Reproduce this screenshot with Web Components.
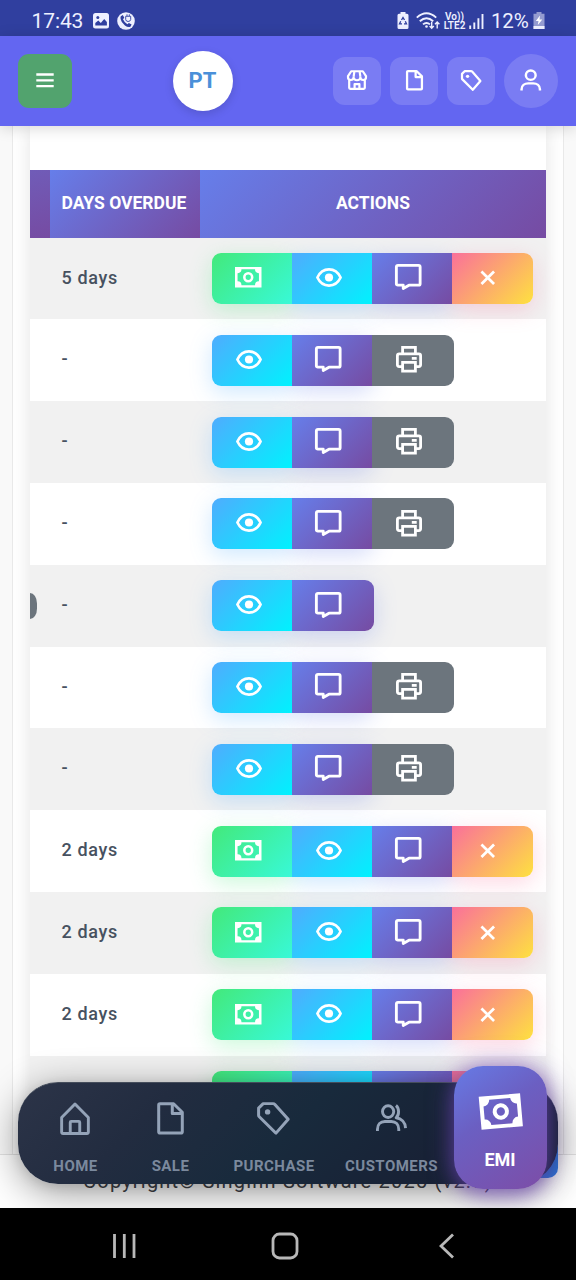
<!DOCTYPE html>
<html lang="en">
<head>
<meta charset="utf-8">
<title>EMI list</title>
<style>
html,body{margin:0;padding:0}
body{width:576px;height:1280px;overflow:hidden;font-family:Roboto,"Liberation Sans",sans-serif;background:#fafafa}
</style>
</head>
<body>
<phone-screen></phone-screen>
<script>
const ICONS = {
  menu:['0 0 20 15','<path d="M1.3 1.5h17.4M1.3 7.4h17.4M1.3 13.2h17.4" stroke-width="2.3"/>'],
  store:['0 0 20 21','<path d="M2.2 9.5v8.8q0 1 1 1h13.6q1 0 1-1V9.5M7.6 19v-4.6h4.8V19M4.2 1.3h11.6L19 6.2v1.2a2.8 2.8 0 0 1-5.6 0 3.4 3.1 0 0 1-6.8 0A2.8 2.8 0 0 1 1 7.4V6.2zM7.4 1.5 6.6 7M12.6 1.5l.8 5.5"/>'],
  file:['0 0 27 33','<path d="M1.7 3q0-1.3 1.3-1.3h13.6l8.7 8.6v19.4q0 1.3-1.3 1.3H3q-1.3 0-1.3-1.3zM15.3 2v9.4h9.8"/>'],
  tag:['0 0 33 34','<path d="M1.6 6.3 6.2 1.7h9.9q1 0 1.8.9L31.2 17.8 19 32.1 2.3 15.2q-.7-.7-.7-1.6z"/><circle cx="10.6" cy="10.2" r="2.7" fill="currentColor" stroke="none"/>'],
  user:['0 0 22 24','<circle cx="11" cy="6.6" r="5"/><path d="M1.6 23v-1.3c0-4 3.2-6.4 6.8-6.4h5.2c3.6 0 6.8 2.4 6.8 6.4V23"/>'],
  users:['0 0 32 28','<circle cx="12.5" cy="7.6" r="5.8"/><path d="M1.5 27v-1.7c0-4.7 3.2-7.8 7.6-7.8h6.8c4.4 0 7.6 3.1 7.6 7.8V27M20.6 1.5c3.5 2.7 3.6 9 .2 12.3 5.5.8 9.4 4.6 9.7 10.4"/>'],
  home:['0 0 31 34','<path d="M1.7 16 15.5 2 29.3 16v15q0 1.4-1.4 1.4H3.1q-1.4 0-1.4-1.4zM10.6 32V21q0-1 1-1h7.8q1 0 1 1v11"/>'],
  money:['0 0 27 21','<path fill="currentColor" stroke="none" fill-rule="evenodd" d="M0 0h27v21H0zM6.6 2.4A3.9 3.9 0 0 1 2.6 6.3v8.4a3.9 3.9 0 0 1 4 3.9h13.8a3.9 3.9 0 0 1 4-3.9V6.3a3.9 3.9 0 0 1-4-3.900z"/><circle cx="13.5" cy="10.5" r="4" stroke-width="2.6"/>'],
  eye:['0 0 26 19','<path d="M1.4 9.5Q5.2 1.4 13 1.4t11.6 8.1q-3.8 8.1-11.6 8.1T1.4 9.5z"/><circle cx="13" cy="9.5" r="4.1" fill="currentColor" stroke="none"/>'],
  chat:['0 0 27 27','<path d="M3 1.4h21q1.6 0 1.6 1.6v17q0 1.6-1.6 1.6H14.2L8.4 25v-3.4H3Q1.4 21.6 1.4 20V3Q1.4 1.4 3 1.4z"/>'],
  print:['0 0 26 27','<path d="M6.6 8V1.4h12.8V8M6.6 21H3.2q-1.8 0-1.8-1.8V9.9Q1.4 8 3.2 8h19.6q1.8 0 1.8 1.9v9.3q0 1.8-1.8 1.8h-3.4M6.6 16.8h12.8v8.8H6.6zM15.8 12.5h4.9" stroke-linejoin="miter"/>'],
  close:['0 0 16 16','<path d="M1.5 1.5l13 13M14.5 1.5l-13 13"/>']
};
const define = (name, html) => customElements.define(name, class extends HTMLElement{
  connectedCallback(){
    if(this.shadowRoot) return;
    this.attachShadow({mode:'open'}).innerHTML = typeof html==='function' ? html(this) : html;
  }
});

define('ui-icon', el => {
  const [vb,body] = ICONS[el.getAttribute('name')];
  return `<style>:host{display:block;flex:none}svg{display:block;overflow:visible}</style>
  <svg style="width:${el.getAttribute('w')}px;height:${el.getAttribute('h')}px" preserveAspectRatio="none" viewBox="${vb}" fill="none" stroke="currentColor" stroke-width="${el.getAttribute('sw')||3}" stroke-linejoin="round" stroke-linecap="butt">${body}</svg>`;
});

define('status-bar', `<style>
:host{display:flex;align-items:center;height:36px;background:#303f9f;color:#eef0ff;padding:6px 31px 0 31.5px;box-sizing:border-box}
svg{display:block;flex:none}.time{font-size:21px;letter-spacing:-.1px;width:61px}.gap{flex:1}
.lte{width:23px;margin:0 3px 0 2px;font-size:10px;line-height:9px;font-weight:600;text-align:center;white-space:nowrap}
.pct{font-size:20.5px;width:38px;margin-left:7px;margin-right:4px;letter-spacing:-.2px}
</style>
<span class="time">17:43</span>
<svg width="16" height="16" viewBox="0 0 16 16"><rect width="16" height="15.4" rx="2.5" fill="#eef0ff"/><path d="M2.3 12.6V10l3-2.4 2.5 2.3 3.4-3.8 2.7 3v3.5z" fill="#303f9f"/><circle cx="4.8" cy="4.4" r="1.5" fill="#303f9f"/></svg>
<svg width="18" height="18" viewBox="0 0 18 18" style="margin-left:8px"><circle cx="9" cy="9" r="8.8" fill="#eef0ff"/><path d="M3.8 4.2 5.8 3l1.5 2.8L6 7.2q1.4 3.4 4.4 5l1.5-1.3 2.7 1.7-1.2 2.2q-2.4 1-5.5-1.3-3.7-3-4.3-6.6Q3.300 5 3.800 4.200z" fill="#303f9f"/><path d="M8.700 4.300h5v3.200q-.3 2-2.600 2-2.100 0-2.400-2zM10 4V2.300M12.300 4V2.300" fill="none" stroke="#303f9f" stroke-width=".9"/></svg>
<span class="gap"></span>
<svg width="12" height="18" viewBox="0 0 12 18"><path d="M3.500 0h5v1.800H10q1.500 0 1.500 1.500V15.500q0 1.500-1.500 1.500H2Q.5 17 .5 15.500V3.300Q.5 1.800 2 1.800h1.500z" fill="#eef0ff"/><path d="M4.500 8 6 5.600 7.500 8M8.300 9.300l1.200 2.500H7M5 11.800H2.500l1.200-2.500" fill="none" stroke="#303f9f" stroke-width="1.300"/></svg>
<svg width="25" height="18" viewBox="0 0 25 18" style="margin-left:7px"><g fill="none" stroke="#eef0ff" stroke-width="1.900"><path d="M.8 5.600Q10.500-3 20.200 5.600M3.800 9.200q6.700-6 13.400 0M7 12.400q3.500-3 7 0"/><path d="M15.700 9.800v6.500M13.600 14l2.100 2.300 2.100-2.300M21.200 16.500V10M19 12.200l2.200-2.300 2.200 2.300" stroke-width="1.400"/></g><circle cx="10.500" cy="14.500" r="1.300" fill="#eef0ff"/></svg>
<div class="lte">Vo))<br>LTE2</div>
<svg width="15" height="17" viewBox="0 0 15 17"><path d="M1.200 12.500V16M5.300 9.500V16M9.400 5.300V16M13.500 1V16" stroke="#eef0ff" stroke-width="1.900"/></svg>
<span class="pct">12%</span>
<svg width="12" height="18" viewBox="0 0 12 18"><path d="M3.500 0h5v1.800h3V17H.5V1.800h3z" fill="#949bd0"/><path d="M.5 14h11v3H.5z" fill="#eef0ff"/><path d="M7 3.500 2.800 9h2.700l-.7 4L9.300 7.500H6.500z" fill="#fff"/></svg>`);

define('header-button', `<style>:host{display:flex;align-items:center;justify-content:center;width:48px;height:48px;border-radius:12px;background:rgba(255,255,255,.15);color:#fff;margin-left:9px;flex:none}
:host([round]){width:54px;height:54px;border-radius:50%}:host([menu]){width:54px;height:54px;background:#52a36e;margin:0;border-radius:11px}</style><slot></slot>`);

define('app-header', `<style>
:host{display:flex;align-items:center;height:90px;box-sizing:border-box;padding:0 18px;background:#6366f1;position:relative;z-index:5;box-shadow:0 2px 14px rgba(0,0,0,.16)}
.logo{width:60px;height:60px;margin-left:101px;border-radius:50%;background:#fff;box-shadow:0 3px 10px rgba(0,0,0,.14);display:flex;align-items:center;justify-content:center;font:700 22px Roboto,sans-serif;color:#4a90d9;letter-spacing:.1px}
.logo span{margin:-2px 1px 0 0}.gap{flex:1}
</style>
<header-button menu><ui-icon name="menu" w="20" h="15" style="margin-top:-1px"></ui-icon></header-button>
<div class="logo"><span>PT</span></div><div class="gap"></div>
<header-button><ui-icon name="store" w="20" h="20.5" sw="2.2" style="margin-top:-1px"></ui-icon></header-button>
<header-button><ui-icon name="file" w="17" h="20.5" sw="3.6" style="margin-top:-1px"></ui-icon></header-button>
<header-button><ui-icon name="tag" w="20.5" h="21" sw="3.6" style="margin-top:-1px"></ui-icon></header-button>
<header-button round><ui-icon name="user" w="21.5" h="22.5" sw="2.5" style="margin-top:-1px"></ui-icon></header-button>`);

define('action-button', el => {
  const k = el.getAttribute('kind');
  const [bg,sh,w,h,sw,dy] = {
    money:['linear-gradient(135deg,#43e97b,#38f9d7)','67,233,123',26.5,20.5,2.6,-2],
    eye:['linear-gradient(135deg,#4facfe,#00f2fe)','79,172,254',26,19,2.7,-2],
    chat:['linear-gradient(135deg,#667eea,#764ba2)','102,126,234',26.5,26.5,2.9,-2],
    print:['#6c757d','0,0,0',26,26.5,2.8,-2],
    close:['linear-gradient(135deg,#fa709a,#fee140)','250,112,154',15.5,15.5,2.8,-1]}[k];
  return `<style>:host{display:flex;align-items:center;justify-content:center;position:relative;width:80px;height:51px;box-sizing:border-box;padding-right:7px;background:${bg};color:#fff}
  :host(:first-child){border-radius:9px 0 0 9px}:host(:last-child){width:${k==='close'?81:82}px;padding-right:9px;border-radius:0 9px 9px 0}
  :host::before{content:"";position:absolute;inset:0;z-index:-1;border-radius:9px;box-shadow:${k==='print'?'none':`0 6px 22px rgba(${sh},.28)`}}
  ui-icon{margin-top:${dy}px}</style><ui-icon name="${k}" w="${w}" h="${h}" sw="${sw}"></ui-icon>`;
});

define('table-head', `<style>
:host{display:flex;height:68px}
div{box-sizing:border-box;background:linear-gradient(135deg,#667eea,#764ba2);color:#fff;font-size:17.5px;font-weight:700;display:flex;align-items:center;padding-bottom:2px;white-space:nowrap;overflow:hidden}
.a{width:19.5px;background:linear-gradient(165deg,#705cb8,#764ba2)}.b{width:150.5px;padding-left:12px}.c{flex:1;justify-content:center}
</style><div class="a"></div><div class="b">DAYS OVERDUE</div><div class="c">ACTIONS</div>`);

define('emi-row', el => `<style>
:host{display:flex;align-items:center;height:81.8px;box-sizing:border-box;background:#fff;color:#475160}
:host([odd]){background:#f1f1f1}
.badge{width:7px;height:26px;background:#6c757d;border-radius:0 8px 8px 0/0 12px 12px 0;visibility:${el.hasAttribute('badge')?'visible':'hidden'}}
.days{margin-left:24.5px;width:150.5px;font-size:18px;font-weight:500;letter-spacing:.65px;padding-bottom:3px;flex:none}
.actions{display:flex;position:relative;z-index:1;isolation:isolate}
</style><div class="badge"></div><div class="days">${el.getAttribute('days')}</div>
<div class="actions">${el.getAttribute('actions').split(' ').map(a=>`<action-button kind="${a}"></action-button>`).join('')}</div>`);

define('emi-table', () => {
  const full='money eye chat close', paid='eye chat print';
  const rows=[['5 days',full],['-',paid],['-',paid],['-',paid],['-','eye chat',1],['-',paid],['-',paid],['2 days',full],['2 days',full],['2 days',full],['2 days',full]];
  return `<style>:host{display:block;width:516px;height:1028px;margin:0 auto;padding-top:43.7px;box-sizing:border-box;background:#fff;box-shadow:0 0 18px rgba(0,0,0,.11)}</style>
  <table-head></table-head>${rows.map((r,i)=>`<emi-row days="${r[0]}" actions="${r[1]}" ${i%2?'':'odd'} ${r[2]?'badge':''}></emi-row>`).join('')}`;
});

define('page-footer', `<style>:host{display:flex;justify-content:center;height:54px;box-sizing:border-box;border-top:1px solid #e2e2e2;background:#fff;color:#3f4247;font-size:20px;letter-spacing:1.2px;line-height:52px;white-space:nowrap;position:relative;z-index:2}</style><span>Copyright© Singinn Software 2025 (v2.7)</span>`);

define('nav-item', `<style>
:host{display:flex;flex-direction:column;align-items:center;justify-content:space-between;box-sizing:border-box;height:101px;padding:18px 0 9.5px;color:#94a3b8;flex:none}
.i{height:34px;display:flex;align-items:center;margin-left:-1px}.l{font-size:15px;font-weight:700;letter-spacing:.45px;line-height:18px;color:#7b899d;white-space:nowrap}
:host([active]){position:absolute;left:436px;top:-17px;width:93px;height:123px;border-radius:29px;background:linear-gradient(145deg,#667eea -5%,#6b5fc2 40%,#7e4ca5 105%);box-shadow:0 0 26px rgba(112,75,190,.6),0 7px 18px rgba(102,60,170,.42);color:#fff;padding:28px 1px 19px 0}
:host([active]) .l{font-size:18px;color:#fff;letter-spacing:-.1px;line-height:20px}
:host([active]) .i{transform:rotate(-5deg);margin-left:1px}
</style><div class="i"><slot name="icon"></slot></div><div class="l"><slot></slot></div>`);

define('bottom-nav', `<style>
:host{display:flex;position:absolute;left:18px;top:956px;width:540px;height:102px;border-radius:40px;z-index:4;background:linear-gradient(135deg,#2c3448 0,#222c40 25%,#182a3c 50%,#182236 75%,#172033);box-shadow:0 8px 38px rgba(0,0,0,.42),0 2px 12px rgba(0,0,0,.1);box-sizing:border-box;border-top:1px solid #454d5b}
</style>
<nav-item style="width:115px"><ui-icon slot="icon" name="home" w="30" h="33"></ui-icon>HOME</nav-item>
<nav-item style="width:75px"><ui-icon slot="icon" name="file" w="27" h="33"></ui-icon>SALE</nav-item>
<nav-item style="width:132px"><ui-icon slot="icon" name="tag" w="33" h="33"></ui-icon>PURCHASE</nav-item>
<nav-item style="width:103px"><ui-icon slot="icon" name="users" w="31" h="28"></ui-icon>CUSTOMERS</nav-item>
<nav-item active><ui-icon slot="icon" name="money" w="41.5" h="33"></ui-icon>EMI</nav-item>`);

define('system-nav', `<style>:host{display:flex;align-items:center;height:72px;background:#000;box-sizing:border-box;padding:4px 121px 0 112px;justify-content:space-between}svg{display:block}</style>
<svg width="24" height="26" viewBox="0 0 24 26"><path d="M2.5 1v24M12.3 1v24M22 1v24" stroke="#b8b8b8" stroke-width="2.8"/></svg>
<svg width="28" height="28" viewBox="0 0 28 28" style="margin-right:6px"><rect x="2" y="2" width="24" height="24" rx="6.5" fill="none" stroke="#b8b8b8" stroke-width="2.8"/></svg>
<svg width="16" height="26" viewBox="0 0 16 26"><path d="M14 1.5 2 13l12 11.5" fill="none" stroke="#b8b8b8" stroke-width="2.8"/></svg>`);

define('phone-screen', `<style>
:host{display:flex;flex-direction:column;width:576px;height:1280px;overflow:hidden}
status-bar,app-header,system-nav{flex:none}
main{position:relative;height:1082px;overflow:hidden;background:#f9f9f9;flex:none}
.card{height:1028px;margin:0 12px;border:solid #e9e9e9;border-width:0 1px;box-sizing:border-box;background:#fff;overflow:hidden}
.top{position:absolute;right:18px;top:1012px;width:40px;height:40px;border-radius:10px;background:#2f80e8;z-index:4}
</style><status-bar></status-bar><app-header></app-header>
<main><div class="card"><emi-table></emi-table></div><page-footer></page-footer><div class="top"></div><bottom-nav></bottom-nav></main><system-nav></system-nav>`);
</script>
</body>
</html>
